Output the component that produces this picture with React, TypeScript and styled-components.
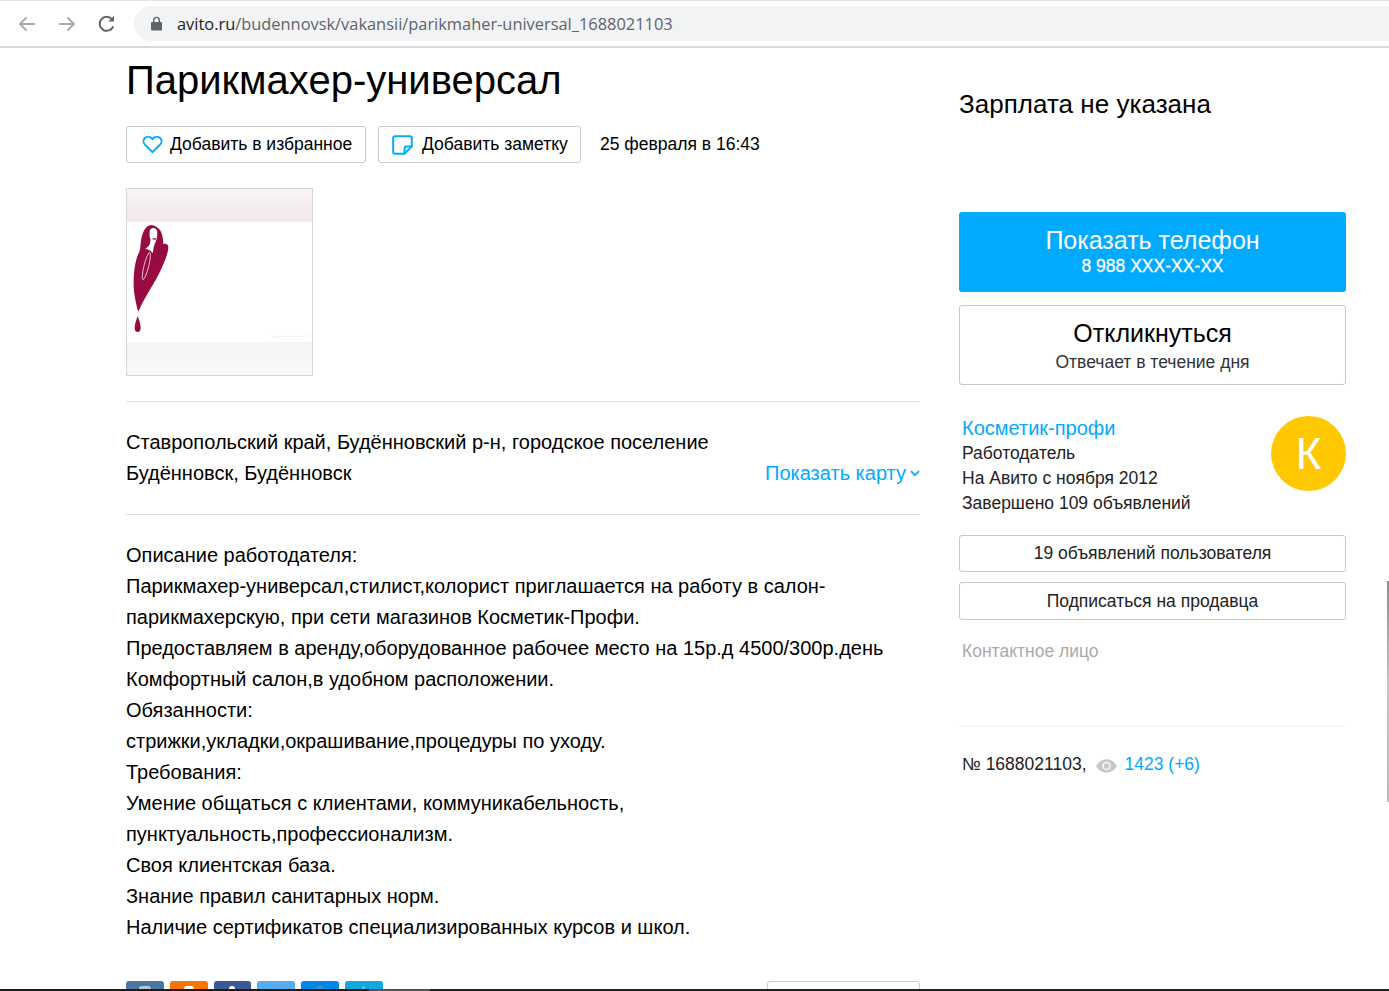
import React from "react";
import styled, { createGlobalStyle } from "styled-components";

const Global = createGlobalStyle`
  html, body { margin: 0; padding: 0; background: #fff; }
  body { font-family: "Liberation Sans", Arial, sans-serif; color: #000; }
  * { box-sizing: border-box; }
`;

const Page = styled.div`
  position: relative;
  width: 1389px;
  height: 991px;
  overflow: hidden;
  background: #fff;
`;

const BrowserBar = styled.header`
  height: 48px;
  display: flex;
  align-items: center;
  padding: 0 0 0 16px;
  border-top: 1px solid #e3e4e8;
  border-bottom: 2px solid #d9dadd;
  background: #fff;
`;

const NavIcon = styled.svg<{ $muted?: boolean; $gap: number }>`
  width: 22px;
  height: 22px;
  margin-right: ${(p) => p.$gap}px;
  flex: none;
  fill: none;
  stroke: ${(p) => (p.$muted ? "#a9abae" : "#5f6368")};
  stroke-width: 2;
`;

const Omnibox = styled.div`
  flex: 1;
  height: 35px;
  display: flex;
  align-items: center;
  padding-left: 16px;
  border-radius: 18px 0 0 18px;
  background: #f1f3f4;
  font-family: "Open Sans", sans-serif;
  font-size: 16.4px;
  color: #5f6368;
`;

const LockIcon = styled.svg`
  width: 13px;
  height: 15px;
  margin-right: 14px;
  fill: #5f6368;
`;

const Host = styled.span`
  color: #1c1d1f;
`;

const Main = styled.main`
  display: grid;
  grid-template-columns: 794px 387px;
  column-gap: 39px;
  padding-left: 126px;
`;

const LeftColumn = styled.section`
  display: flex;
  flex-direction: column;
`;

const Title = styled.h1`
  margin: 7px 0 0;
  font-size: 40px;
  line-height: 50px;
  font-weight: 400;
`;

const ActionRow = styled.div`
  display: flex;
  align-items: center;
  margin-top: 21px;
  font-size: 17.5px;
`;

const ActionButton = styled.button<{ $width: number; $pad: number }>`
  width: ${(p) => p.$width}px;
  height: 37px;
  display: flex;
  align-items: center;
  gap: 7px;
  margin-right: 12px;
  padding: 0 0 0 ${(p) => p.$pad}px;
  border: 1px solid #c9c9c9;
  border-radius: 3px;
  background: #fff;
  color: #000;
  font: inherit;
`;

const NoteIcon = styled.svg`
  margin-right: 2px;
  fill: none;
  stroke: #0af;
  stroke-width: 2;
`;

const DateText = styled.span`
  margin-left: 7px;
`;

const Photo = styled.div`
  width: 187px;
  height: 188px;
  margin-top: 25px;
  display: flex;
  flex-direction: column;
  border: 1px solid #d5d5d5;
  background: #fff;
`;

const PhotoBandTop = styled.div`
  height: 33px;
  background: linear-gradient(180deg, #f8f5f6 0%, #f4ecf0 60%, #f1e9ed 100%);
`;

const PhotoBody = styled.div`
  flex: 1;
  display: flex;
`;

const PhotoBandBottom = styled.div`
  height: 33px;
  background: linear-gradient(180deg, #f6f6f5 0%, #f8f8f7 100%);
`;

const AddressBlock = styled.div`
  display: flex;
  justify-content: space-between;
  align-items: flex-end;
  margin-top: 25px;
  padding: 25px 0 25px;
  border-top: 1px solid #e0e0e0;
  border-bottom: 1px solid #e0e0e0;
  font-size: 20px;
  line-height: 31px;
`;

const AddressText = styled.div`
  width: 600px;
`;

const MapLink = styled.a`
  display: flex;
  align-items: center;
  gap: 4px;
  color: #0af;
  font-size: 20px;
`;

const Description = styled.div`
  margin-top: 25px;
  font-size: 20px;
  line-height: 31px;
`;

const ShareRow = styled.div`
  display: flex;
  justify-content: space-between;
  margin-top: 38px;
`;

const ShareGroup = styled.div`
  display: flex;
  gap: 6px;
`;

const ShareButton = styled.div<{ $bg: string }>`
  width: 37.8px;
  height: 38px;
  border-radius: 3px;
  background: ${(p) => p.$bg};
  display: flex;
  justify-content: center;
  padding-top: 5px;
`;

const ShareMark = styled.span<{ $w: number; $color: string }>`
  width: ${(p) => p.$w}px;
  height: 6px;
  border-radius: 3px 3px 0 0;
  background: ${(p) => p.$color};
`;

const OutlineBox = styled.div`
  width: 153px;
  height: 38px;
  border: 1px solid #c9c9c9;
  border-radius: 3px;
`;

const RightColumn = styled.aside`
  display: flex;
  flex-direction: column;
`;

const Salary = styled.div`
  margin-top: 39px;
  font-size: 26px;
  line-height: 34px;
  letter-spacing: 0.03px;
`;

const CallButton = styled.div`
  height: 80px;
  margin-top: 91px;
  display: flex;
  flex-direction: column;
  align-items: center;
  justify-content: center;
  border-radius: 3px;
  background: #0af;
  color: #fff;
`;

const RespondButton = styled.div`
  height: 80px;
  margin-top: 13px;
  display: flex;
  flex-direction: column;
  align-items: center;
  justify-content: center;
  border: 1px solid #c9c9c9;
  border-radius: 3px;
  color: #000;
`;

const ButtonMain = styled.div`
  font-size: 25px;
  line-height: 28px;
`;

const ButtonSub = styled.div<{ $strong?: boolean }>`
  margin: ${(p) => (p.$strong ? "1px 0 2px" : "4px 0 -1px")};
  font-size: 17.5px;
  line-height: 22px;
  -webkit-text-stroke: ${(p) => (p.$strong ? "0.3px #fff" : "0")};
  color: ${(p) => (p.$strong ? "#fff" : "#333")};
`;

const Seller = styled.div`
  display: flex;
  justify-content: space-between;
  margin-top: 30px;
  padding-left: 3px;
`;

const SellerName = styled.a`
  display: block;
  color: #0af;
  font-size: 20px;
  line-height: 26px;
`;

const SellerLine = styled.div`
  font-size: 17.5px;
  line-height: 25px;
  color: #222;
`;

const Avatar = styled.div`
  width: 75px;
  height: 75px;
  margin-top: 1px;
  display: flex;
  align-items: center;
  justify-content: center;
  border-radius: 50%;
  background: #ffc800;
  color: #fff;
  font-size: 44px;
`;

const SellerButton = styled.div<{ $gap: number; $height: number }>`
  height: ${(p) => p.$height}px;
  margin-top: ${(p) => p.$gap}px;
  display: flex;
  align-items: center;
  justify-content: center;
  border: 1px solid #c9c9c9;
  border-radius: 3px;
  font-size: 17.5px;
  color: #222;
`;

const ContactLabel = styled.div`
  margin-top: 19px;
  padding: 0 0 62px 3px;
  border-bottom: 1px solid #f1f1f1;
  font-size: 17.5px;
  line-height: 25px;
  color: #aaa;
`;

const MetaRow = styled.div`
  display: flex;
  align-items: center;
  margin-top: 25px;
  padding-left: 3px;
  font-size: 17.5px;
  line-height: 25px;
  color: #222;
`;

const EyeIcon = styled.svg`
  width: 21px;
  height: 14px;
  margin: 2px 8px 0 9px;
  fill: #c8c8c8;
`;

const ViewCount = styled.a`
  color: #0af;
`;

const ScrollEdge = styled.div`
  position: absolute;
  right: 0;
  top: 581px;
  width: 2px;
  height: 221px;
  background: linear-gradient(180deg, #8d8d8d 0%, #9a9a9a 12%, #c4c4c4 45%, #bdbdbd 100%);
`;

const BottomEdge = styled.div`
  position: absolute;
  left: 0;
  right: 0;
  bottom: 0;
  height: 2px;
  background: linear-gradient(90deg, #1f1b18 0 369px, #5a5250 369px 430px, #241f1c 430px);
`;

const descriptionLines = [
  "Описание работодателя:",
  "Парикмахер-универсал,стилист,колорист приглашается на работу в салон-",
  "парикмахерскую, при сети магазинов Косметик-Профи.",
  "Предоставляем в аренду,оборудованное рабочее место на 15р.д 4500/300р.день",
  "Комфортный салон,в удобном расположении.",
  "Обязанности:",
  "стрижки,укладки,окрашивание,процедуры по уходу.",
  "Требования:",
  "Умение общаться с клиентами, коммуникабельность,",
  "пунктуальность,профессионализм.",
  "Своя клиентская база.",
  "Знание правил санитарных норм.",
  "Наличие сертификатов специализированных курсов и школ.",
];

const shareButtons = [
  { bg: "#4c75a3", w: 12, mark: "#b7c6d6" },
  { bg: "#f97400", w: 10, mark: "#ffffff" },
  { bg: "#3b5998", w: 6, mark: "#ffffff" },
  { bg: "#55acee", w: 0, mark: "transparent" },
  { bg: "#0088e8", w: 8, mark: "#3f8fc8" },
  { bg: "#14a6de", w: 3, mark: "#5fbfe6" },
];

export default function App() {
  return (
    <Page>
      <Global />
      <BrowserBar>
        <NavIcon viewBox="0 0 22 22" $muted $gap={18}>
          <path d="M19 11H4M10.5 4.5 4 11l6.5 6.5" />
        </NavIcon>
        <NavIcon viewBox="0 0 22 22" $muted $gap={18}>
          <path d="M3 11h15M11.5 4.5 18 11l-6.5 6.5" />
        </NavIcon>
        <NavIcon viewBox="0 0 22 22" $gap={16}>
          <path d="M17.2 13.4A7 7 0 1 1 16 6.2" />
          <path d="M18 2.8v5.7h-5.7" fill="#5f6368" stroke="none" />
        </NavIcon>
        <Omnibox>
          <LockIcon viewBox="0 0 13 15">
            <path d="M3 6V4.200a3.500 3.500 0 0 1 7 0V6h1a1 1 0 0 1 1 1v6.500a1 1 0 0 1-1 1H2a1 1 0 0 1-1-1V7a1 1 0 0 1 1-1h1Zm1.400 0h4.200V4.200a2.100 2.100 0 0 0-4.200 0V6Z" />
          </LockIcon>
          <span>
            <Host>avito.ru</Host>/budennovsk/vakansii/parikmaher-universal_1688021103
          </span>
        </Omnibox>
      </BrowserBar>
      <Main>
        <LeftColumn>
          <Title>Парикмахер-универсал</Title>
          <ActionRow>
            <ActionButton $width={240} $pad={15}>
              <svg width="21" height="19" viewBox="0 0 21 19" fill="none" stroke="#0af" strokeWidth="2">
                <path d="M10.500 17.200 2.900 9.600a4.700 4.700 0 0 1 0-6.600 4.600 4.600 0 0 1 6.500 0l1.100 1.100L11.600 3a4.600 4.600 0 0 1 6.500 0 4.700 4.700 0 0 1 0 6.600l-7.600 7.600Z" />
              </svg>
              Добавить в избранное
            </ActionButton>
            <ActionButton $width={203} $pad={13}>
              <NoteIcon width="21" height="20" viewBox="0 0 21 20">
                <path d="M12.500 18.800H3a1.800 1.800 0 0 1-1.800-1.800V3A1.800 1.800 0 0 1 3 1.200h15A1.800 1.800 0 0 1 19.800 3v8.600l-7.300 7.200Z" />
                <path d="M12.500 18.500v-5a2 2 0 0 1 2-2h5" />
              </NoteIcon>
              Добавить заметку
            </ActionButton>
            <DateText>25 февраля в 16:43</DateText>
          </ActionRow>
          <Photo>
            <PhotoBandTop />
            <PhotoBody>
              <svg width="185" height="120" viewBox="21 126 555 360">
                <path
                  d="M95 135C75 135 65 160 62 190C61 205 60 212 58 215C45 240 40 280 41 320C43 350 50 380 55 395C70 360 90 330 110 295C125 265 145 225 145 200C143 190 135 190 130 192C130 170 125 140 95 135Z"
                  fill="#980b42"
                />
                <path
                  d="M90 150C95 142 108 142 111 152C113 165 111 180 104 192C101 200 100 210 98 220C94 212 86 208 76 206C88 200 92 190 91 178C88 168 88 158 90 150Z"
                  fill="#fff"
                />
                <path d="M98 174h10v5h-10Z" fill="#b5345f" />
                <ellipse cx="79" cy="258" rx="7" ry="42" transform="rotate(14 79 258)" fill="none" stroke="#eccfda" strokeWidth="2.500" />
                <path d="M53 408C58 420 62 435 62 443C62 452 58 456 53 456C47 456 44 451 44 443C44 433 49 420 53 408Z" fill="#980b42" />
                <path d="M450 469h100c8 0 15-1 18-6M465 470a6 4 0 0 0 14 0" fill="none" stroke="#e4e4e4" strokeWidth="1.500" />
              </svg>
            </PhotoBody>
            <PhotoBandBottom />
          </Photo>
          <AddressBlock>
            <AddressText>
              Ставропольский край, Будённовский р-н, городское поселение Будённовск, Будённовск
            </AddressText>
            <MapLink>
              Показать карту
              <svg width="10" height="7" viewBox="0 0 10 7" fill="none" stroke="#0af" strokeWidth="1.700">
                <path d="m1 1.200 4 4 4-4" />
              </svg>
            </MapLink>
          </AddressBlock>
          <Description>
            {descriptionLines.map((line) => (
              <div key={line}>{line}</div>
            ))}
          </Description>
          <ShareRow>
            <ShareGroup>
              {shareButtons.map((item) => (
                <ShareButton key={item.bg} $bg={item.bg}>
                  <ShareMark $w={item.w} $color={item.mark} />
                </ShareButton>
              ))}
            </ShareGroup>
            <OutlineBox />
          </ShareRow>
        </LeftColumn>
        <RightColumn>
          <Salary>Зарплата не указана</Salary>
          <CallButton>
            <ButtonMain>Показать телефон</ButtonMain>
            <ButtonSub $strong>8 988 XXX-XX-XX</ButtonSub>
          </CallButton>
          <RespondButton>
            <ButtonMain>Откликнуться</ButtonMain>
            <ButtonSub>Отвечает в течение дня</ButtonSub>
          </RespondButton>
          <Seller>
            <div>
              <SellerName>Косметик-профи</SellerName>
              <SellerLine>Работодатель</SellerLine>
              <SellerLine>На Авито с ноября 2012</SellerLine>
              <SellerLine>Завершено 109 объявлений</SellerLine>
            </div>
            <Avatar>К</Avatar>
          </Seller>
          <SellerButton $gap={19} $height={37}>19 объявлений пользователя</SellerButton>
          <SellerButton $gap={10} $height={38}>Подписаться на продавца</SellerButton>
          <ContactLabel>Контактное лицо</ContactLabel>
          <MetaRow>
            № 1688021103,
            <EyeIcon viewBox="0 0 22 14">
              <path d="M11 0c5 0 9 3.400 11 7-2 3.600-6 7-11 7S2 10.600 0 7c2-3.600 6-7 11-7Zm0 2.800a4.200 4.200 0 1 0 0 8.400 4.200 4.200 0 0 0 0-8.400Zm0 1.200a3 3 0 1 1 0 6 3 3 0 0 1 0-6Z" fillRule="evenodd" />
            </EyeIcon>
            <ViewCount>1423 (+6)</ViewCount>
          </MetaRow>
        </RightColumn>
      </Main>
      <ScrollEdge />
      <BottomEdge />
    </Page>
  );
}
